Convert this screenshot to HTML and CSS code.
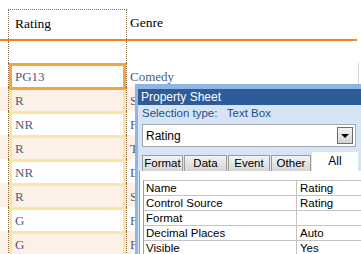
FILE: index.html
```html
<!DOCTYPE html>
<html lang="en">
<head>
    <meta charset="UTF-8">
    <title>Movies - Form View</title>
    <link rel="stylesheet" href="styles.css">
</head>
<body>
    <div class="form-view">
        <div class="form-header">
            <div class="col-rating head">Rating</div>
            <div class="col-genre head">Genre</div>
        </div>
        <div class="form-gap">
            <div class="col-rating"></div>
        </div>

        <div class="rows">
            <div class="row">
                <div class="col-rating"><div class="cell selected">PG13</div></div>
                <div class="col-genre">Comedy</div>
            </div>
            <div class="row">
                <div class="col-rating"><div class="cell">R</div></div>
                <div class="col-genre">Suspense</div>
            </div>
            <div class="row">
                <div class="col-rating"><div class="cell">NR</div></div>
                <div class="col-genre">Foreign</div>
            </div>
            <div class="row">
                <div class="col-rating"><div class="cell">R</div></div>
                <div class="col-genre">Thriller</div>
            </div>
            <div class="row">
                <div class="col-rating"><div class="cell">NR</div></div>
                <div class="col-genre">Drama</div>
            </div>
            <div class="row">
                <div class="col-rating"><div class="cell">R</div></div>
                <div class="col-genre">Suspense</div>
            </div>
            <div class="row">
                <div class="col-rating"><div class="cell">G</div></div>
                <div class="col-genre">Family</div>
            </div>
            <div class="row">
                <div class="col-rating"><div class="cell">G</div></div>
                <div class="col-genre">Family</div>
            </div>
        </div>
    </div>

    <!-- floating property sheet -->
    <div class="sheet">
        <div class="sheet-title">Property Sheet</div>
        <div class="sheet-body">
            <div class="sel-type">Selection type:&nbsp;&nbsp; Text Box</div>
            <div class="combo">
                <span>Rating</span>
                <div class="combo-btn">
                    <svg width="8" height="4" viewBox="0 0 8 4"><path d="M0 0h8L4 4z" fill="#000"/></svg>
                </div>
            </div>
            <div class="tabs">
                <div class="tab">Format</div>
                <div class="tab">Data</div>
                <div class="tab">Event</div>
                <div class="tab">Other</div>
                <div class="tab active">All</div>
            </div>
            <div class="panel">
                <div class="grid">
                    <div class="prop"><span class="key">Name</span><span class="val">Rating</span></div>
                    <div class="prop"><span class="key">Control Source</span><span class="val">Rating</span></div>
                    <div class="prop"><span class="key">Format</span><span class="val"></span></div>
                    <div class="prop"><span class="key">Decimal Places</span><span class="val">Auto</span></div>
                    <div class="prop"><span class="key">Visible</span><span class="val">Yes</span></div>
                </div>
            </div>
        </div>
    </div>
</body>
</html>
```

FILE: styles.css
```css
:root {
    --orange: #f5821f;
    --sel-orange: #f7a43a;
    --frame-yellow: #fde4a2;
    --peach: #fdf0e7;
    --dots: #8a6c4e;
    --row-text: #4a5c84;
    --sheet-frame: #8fb5e4;
    --sheet-title: #2e5b9a;
    --sheet-bg: #d6e4f5;
    --sheet-text: #1d4f8f;
    --grid-line: #c4c4c4;
}

* {
    margin: 0;
    padding: 0;
    box-sizing: border-box;
}

html, body {
    overflow: hidden;
}

body {
    background: #ffffff;
    font-family: 'Liberation Serif', 'Times New Roman', serif;
    font-size: 13px;
    color: #000;
    width: 361px;
    height: 254px;
    position: relative;
}

/* form view */
.form-view {
    height: 254px;
    overflow: hidden;
}

.form-header {
    display: flex;
    height: 41px;
    width: 357px;
    border-bottom: 2px solid var(--orange);
}

.col-rating {
    width: 119px;
    margin-left: 8px;
    border-left: 1px dotted var(--dots);
    border-right: 1px dotted var(--dots);
    flex-shrink: 0;
}

.col-rating.head {
    margin-top: 9px;
    border-top: 1px dotted var(--dots);
    padding: 6px 0 0 6px;
    font-size: 13.5px;
}

.col-genre.head {
    padding: 15px 0 0 3px;
    font-size: 13.5px;
}

.form-gap {
    height: 22px;
    display: flex;
}

.rows {
    width: 359px;
    border-right: 1px solid #d6d6d6;
}

.row {
    display: flex;
    height: 24px;
    background: #ffffff;
}

.row:nth-child(even) {
    background: var(--peach);
}

.cell {
    height: 24px;
    border: 3px solid var(--frame-yellow);
    border-bottom: 0;
    padding-left: 3px;
    line-height: 21px;
    color: var(--row-text);
}

.cell.selected {
    position: relative;
    z-index: 1;
    height: 27px;
    border: 3px solid var(--sel-orange);
    background: #ffffff;
}

.col-genre {
    padding: 3px 0 0 3px;
    line-height: 21px;
    color: var(--row-text);
    white-space: nowrap;
}

.col-genre.head {
    color: #000;
    line-height: normal;
}

/* property sheet */
.sheet {
    position: absolute;
    left: 135px;
    top: 84px;
    width: 226px;
    height: 170px;
    overflow: hidden;
    background: var(--sheet-frame);
    padding: 5px 0 0 3px;
    font-family: 'Liberation Sans', Arial, sans-serif;
    font-size: 11.5px;
}

.sheet-title {
    height: 16px;
    line-height: 16px;
    background: var(--sheet-title);
    color: #ffffff;
    padding-left: 3px;
    font-size: 12px;
}

.sheet-body {
    background: var(--sheet-bg);
    padding-left: 4px;
    height: 150px;
}

.sel-type {
    height: 19px;
    line-height: 16px;
    color: var(--sheet-text);
}

.combo {
    width: 214px;
    height: 23px;
    background: #ffffff;
    border: 1px solid #a3a9b2;
    display: flex;
    align-items: center;
    justify-content: space-between;
    padding: 0 2px 0 3px;
    font-size: 12px;
}

.combo-btn {
    width: 16px;
    height: 17px;
    border: 1px solid #6e6e6e;
    background: linear-gradient(#f4f4f4, #d4d4d4);
    display: flex;
    align-items: center;
    justify-content: center;
}

.tabs {
    display: flex;
    align-items: flex-end;
    height: 19px;
    margin-top: 5px;
}

.tab {
    height: 16px;
    line-height: 15px;
    margin-right: 1px;
    border: 1px solid #9c9c9c;
    border-bottom: 0;
    background: linear-gradient(#f3f3f3, #d6d6d6);
    font-size: 11.5px;
    text-align: center;
    white-space: nowrap;
}

.tab:nth-child(1) { width: 41px; }
.tab:nth-child(2) { width: 43px; }
.tab:nth-child(3) { width: 42px; }
.tab:nth-child(4) { width: 40px; }

.tab.active {
    width: 46px;
    height: 19px;
    line-height: 16px;
    background: #ffffff;
    border-color: #ffffff;
    font-size: 12px;
}

.panel {
    margin-left: -3px;
    background: #ffffff;
    border-left: 1px solid #9c9c9c;
    padding: 9px 0 0 3px;
    height: 100px;
}

.grid {
    border-left: 1px solid #a0a0a0;
}

.prop {
    display: flex;
    height: 15px;
    line-height: 14px;
    border-top: 1px solid var(--grid-line);
}

.key {
    width: 152px;
    padding-left: 2px;
}

.val {
    flex: 1;
    border-left: 1px solid var(--grid-line);
    padding-left: 3px;
}
```
